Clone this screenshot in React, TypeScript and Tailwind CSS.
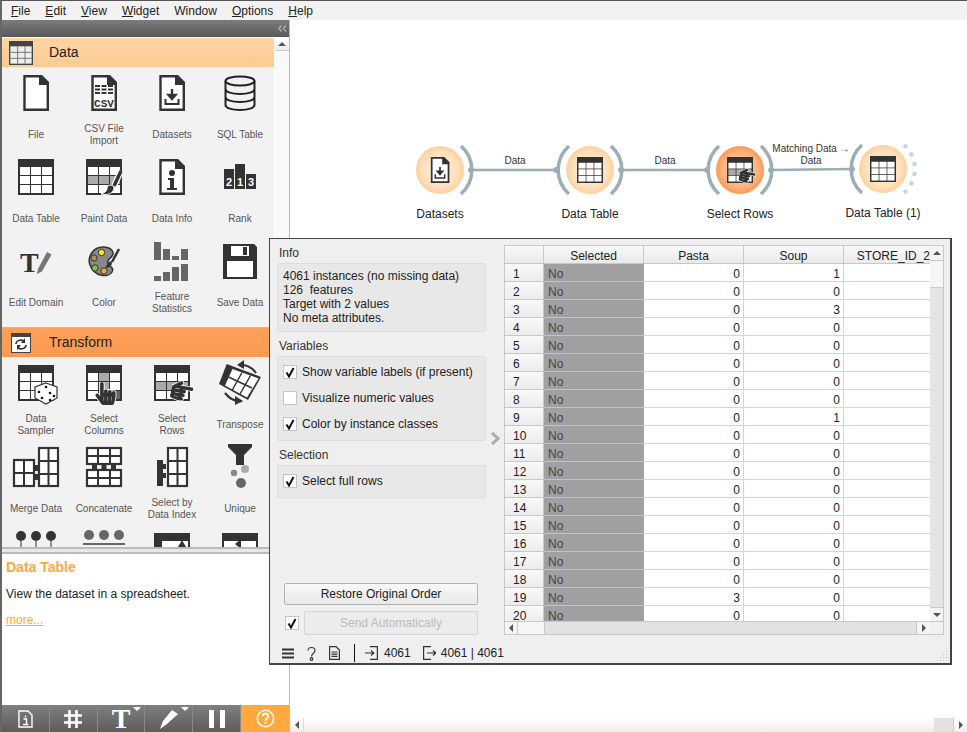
import type { ReactNode } from "react";
import { FaHandPointer } from "react-icons/fa";

const DARK = "#333";

function Ico({ children, x, y, size = 36 }: { children: ReactNode; x?: number; y?: number; size?: number }) {
  return (
    <svg className="overflow-visible" viewBox="0 0 36 36" width={size} height={size} x={x} y={y}>
      {children}
    </svg>
  );
}

// table drawing shared by most of the widgets
function Tbl({ tint }: { tint?: (r: number, c: number) => string | undefined }) {
  const xs = [2, 13, 24];
  const ys = [8, 17, 26];
  return (
    <g>
      <rect width="36" height="36" fill={DARK} />
      {ys.map((y, r) =>
        xs.map((x, c) => (
          <rect key={`${r}${c}`} x={x} y={y} width="10" height="8" fill={tint?.(r, c) ?? "#fff"} />
        )),
      )}
    </g>
  );
}

function Doc({ children }: { children?: ReactNode }) {
  return (
    <g>
      <path d="M6.5 1.2H22L29.8 9V34.8H6.5Z" fill="#fff" stroke={DARK} strokeWidth="2.4" />
      <path d="M21 0H24L31 7V10H21Z" fill={DARK} />
      {children}
    </g>
  );
}

const DownloadDoc = () => (
  <Doc>
    <path d="M18 14V22M14.5 20H21.5L18 24Z" stroke={DARK} strokeWidth="2.4" fill={DARK} />
    <path d="M11.5 24V29H24.5V24" stroke={DARK} strokeWidth="2" fill="none" />
  </Doc>
);

const Hand = ({ x, y, size }: { x: number; y: number; size: number }) => (
  <FaHandPointer x={x} y={y} size={size} color={DARK} stroke="#fff" strokeWidth={36} paintOrder="stroke" />
);

const Brush = () => (
  <g>
    <path d="M35 12L28 27" stroke="#fff" strokeWidth="6" />
    <path d="M35 12L28 27" stroke={DARK} strokeWidth="3.5" />
    <path d="M24 26C28 26 29 29 27 32C25 36 18 36 15 35C18 34 20 33 21 30C21 28 22 26 24 26Z" fill={DARK} stroke="#fff" strokeWidth="1" />
  </g>
);

const SelectRowsIcon = () => (
  <>
    <Tbl tint={(r) => (r === 1 ? "#aaa" : undefined)} />
    <g transform="rotate(100 28 26)">
      <Hand x={17} y={15} size={22} />
    </g>
  </>
);

const Pieces = ({ d }: { d: string }) => <path d={d} fill="none" stroke={DARK} strokeWidth="2" />;

const rows: { label: string; icon: ReactNode }[][] = [
  [
    { label: "File", icon: <Doc /> },
    {
      label: "CSV File\nImport",
      icon: (
        <Doc>
          <path d="M9 11H27M9 14.5H27M9 18H27" stroke={DARK} strokeWidth="2" strokeDasharray="5 1.5" />
          <text x="18" y="32" textAnchor="middle" fontSize="11" fontWeight="700" fill={DARK} fontFamily="Liberation Mono, monospace">CSV</text>
        </Doc>
      ),
    },
    { label: "Datasets", icon: <DownloadDoc /> },
    {
      label: "SQL Table",
      icon: (
        <g fill="none" stroke="#222" strokeWidth="2">
          <ellipse cx="18" cy="6" rx="14.5" ry="4.5" />
          <path d="M3.5 6V30C3.5 33 10 35 18 35S32.5 33 32.5 30V6M3.5 14C3.5 17 10 19 18 19S32.5 17 32.5 14M3.5 22C3.5 25 10 27 18 27S32.5 25 32.5 22" />
        </g>
      ),
    },
  ],
  [
    { label: "Data Table", icon: <Tbl /> },
    {
      label: "Paint Data",
      icon: (
        <>
          <Tbl tint={(r) => (r === 1 ? "#aaa" : undefined)} />
          <Brush />
        </>
      ),
    },
    {
      label: "Data Info",
      icon: (
        <Doc>
          <circle cx="18" cy="14" r="3" fill={DARK} />
          <path d="M14 19H20V29H23V31H13V29H16V21H14Z" fill={DARK} />
        </Doc>
      ),
    },
    {
      label: "Rank",
      icon: (
        <g>
          <rect x="2" y="10" width="10" height="20" fill={DARK} />
          <rect x="13" y="5" width="10" height="25" fill={DARK} />
          <rect x="24" y="15" width="10" height="15" fill={DARK} />
          <g fill="#fff" fontSize="11" fontWeight="700" textAnchor="middle" fontFamily="Liberation Sans, sans-serif">
            <text x="7" y="27">2</text>
            <text x="18" y="27">1</text>
            <text x="29" y="27">3</text>
          </g>
        </g>
      ),
    },
  ],
  [
    {
      label: "Edit Domain",
      icon: (
        <g>
          <text x="2" y="29" fontSize="28" fontWeight="700" fill={DARK} fontFamily="Liberation Serif, serif">T</text>
          <path d="M20 26L29 9L33.5 11.5L24 28.5L19 31Z" fill="#777" />
        </g>
      ),
    },
    {
      label: "Color",
      icon: (
        <g>
          <path d="M4 22C1 14 7 4 17 4C25 4 29 9 26 13C24 16 20 17 22 21C25 24 28 25 26 29C23 35 8 34 4 22Z" fill="#888" stroke={DARK} strokeWidth="1.5" />
          <circle cx="15.5" cy="9.5" r="3.2" fill="#f5e62e" stroke={DARK} />
          <circle cx="8" cy="15" r="3.2" fill="#b58a5a" stroke={DARK} />
          <circle cx="9" cy="25" r="3.2" fill="#86c232" stroke={DARK} />
          <circle cx="18" cy="28" r="3.2" fill="#f2a33a" stroke={DARK} />
          <path d="M33 6L26 19" stroke={DARK} strokeWidth="2.5" />
          <path d="M25 18C27 20 26 25 19 25C21 23 21 19 25 18Z" fill={DARK} />
        </g>
      ),
    },
    {
      label: "Feature\nStatistics",
      icon: (
        <g fill="#666">
          <rect x="0" y="-1" width="7" height="18" />
          <rect x="9" y="6" width="7" height="11" />
          <rect x="18" y="13" width="7" height="4" />
          <rect x="27" y="6" width="7" height="11" />
          <rect x="0" y="33" width="7" height="5" />
          <rect x="9" y="29" width="7" height="9" />
          <rect x="18" y="24" width="7" height="14" />
          <rect x="27" y="21" width="7" height="17" />
        </g>
      ),
    },
    {
      label: "Save Data",
      icon: (
        <g>
          <path d="M1 1H32L35 4V36H1Z" fill={DARK} />
          <rect x="9" y="3" width="18" height="10" fill="#fff" />
          <rect x="21" y="4" width="4" height="8" fill={DARK} />
          <rect x="5" y="18" width="26" height="16" fill="#fff" />
        </g>
      ),
    },
  ],
];

const transformRows: { label: string; icon: ReactNode }[][] = [
  [
    {
      label: "Data\nSampler",
      icon: (
        <>
          <Tbl />
          <path d="M28 18L39 22V33L28 39L17 33V22Z" fill="#fff" stroke={DARK} strokeWidth="1.2" />
          <g fill="#111">
            <circle cx="28" cy="22" r="1.3" />
            <circle cx="21" cy="27" r="1.3" />
            <circle cx="24" cy="33" r="1.3" />
            <circle cx="32" cy="28" r="1.3" />
            <circle cx="36" cy="31" r="1.3" />
            <circle cx="32" cy="35" r="1.3" />
          </g>
        </>
      ),
    },
    {
      label: "Select\nColumns",
      icon: (
        <>
          <Tbl tint={(r, c) => (c === 1 ? "#aaa" : r === 2 && c === 2 ? "#666" : undefined)} />
          <Hand x={8} y={17} size={23} />
        </>
      ),
    },
    { label: "Select\nRows", icon: <SelectRowsIcon /> },
    {
      label: "Transpose",
      icon: (
        <g>
          <path d="M4.7 -1L39 12L26 35L-3 19Z" fill={DARK} />
          <path d="M10.5 4L36.5 13.5L25 32.5L3 20.5Z" fill="#fff" />
          <path d="M20 7.5L10 25.5M28.5 10.5L18 29M6.5 12L30 23" stroke={DARK} strokeWidth="1.5" fill="none" />
          <path d="M17 0C23 -1 30 2 34 8M3 28C7 33 13 37 20 36" fill="none" stroke={DARK} strokeWidth="2.2" />
          <path d="M22 -5V4L15 0ZM13 31V40L21 36Z" fill={DARK} />
        </g>
      ),
    },
  ],
  [
    {
      label: "Merge Data",
      icon: (
        <g>
          <rect x="-4" y="11" width="20" height="26" fill="#fff" stroke={DARK} strokeWidth="2.2" />
          <rect x="21" y="-1" width="19" height="38" fill="#fff" stroke={DARK} strokeWidth="2.2" />
          <Pieces d="M6 11V37M-4 24H16M30.5 -1V37M21 12H40M21 25H40" />
          <path d="M15 16H22V22H15ZM15 25H22V31H15Z" fill={DARK} />
        </g>
      ),
    },
    {
      label: "Concatenate",
      icon: (
        <g>
          <rect x="1" y="-1" width="34" height="16" fill="#fff" stroke={DARK} strokeWidth="2.2" />
          <rect x="1" y="21" width="34" height="16" fill="#fff" stroke={DARK} strokeWidth="2.2" />
          <Pieces d="M12 -1V15M24 -1V15M1 7H35M12 21V37M24 21V37M1 29H35" />
          <path d="M6 15H11V21H6ZM15.5 15H20.5V21H15.5ZM25 15H30V21H25Z" fill={DARK} />
        </g>
      ),
    },
    {
      label: "Select by\nData Index",
      icon: (
        <g>
          <rect x="14" y="-1" width="19" height="38" fill="#fff" stroke={DARK} strokeWidth="2.2" />
          <Pieces d="M23.5 -1V37M14 12H33M14 25H33" />
          <path d="M3 11H9V15H12V20H9V24H12V29H9V37H3Z" fill={DARK} />
        </g>
      ),
    },
    {
      label: "Unique",
      icon: (
        <g>
          <path d="M6 -5H30V-2L22 6V16H14V6L6 -2Z" fill={DARK} />
          <circle cx="23" cy="20" r="4" fill="#aaa" />
          <circle cx="12" cy="24" r="3.2" fill="#888" />
          <circle cx="19" cy="34" r="5" fill="#666" />
        </g>
      ),
    },
  ],
  [
    {
      label: "",
      icon: (
        <g fill={DARK}>
          <circle cx="3" cy="3" r="5" />
          <circle cx="18" cy="3" r="5" />
          <circle cx="33" cy="3" r="5" />
          <rect x="2.5" y="8" width="1" height="6" />
          <rect x="17.5" y="8" width="1" height="6" />
          <rect x="32.5" y="8" width="1" height="6" />
        </g>
      ),
    },
    {
      label: "",
      icon: (
        <g fill="#666">
          <circle cx="3" cy="2" r="5" />
          <circle cx="18" cy="2" r="5" />
          <circle cx="33" cy="2" r="5" />
          <rect x="-3" y="10" width="42" height="2" />
        </g>
      ),
    },
    {
      label: "",
      icon: (
        <g>
          <rect width="36" height="36" fill={DARK} />
          <rect x="8" y="8" width="26" height="20" fill="#fff" />
          <path d="M28 7L32 14H24Z" fill={DARK} />
        </g>
      ),
    },
    {
      label: "",
      icon: (
        <g>
          <rect width="36" height="36" fill={DARK} />
          <rect x="2" y="8" width="32" height="20" fill="#fff" />
          <path d="M13 11L19 6V16Z" fill={DARK} />
        </g>
      ),
    },
  ],
];

function WidgetGrid({ data }: { data: { label: string; icon: ReactNode }[][] }) {
  return (
    <div className="grid grid-cols-[repeat(4,68px)] auto-rows-[84px]">
      {data.flat().map((w, i) => (
        <div key={i} className="flex flex-col items-center pt-2">
          <Ico>{w.icon}</Ico>
          <div className="mt-[11px] flex h-[26px] w-[68px] items-center justify-center text-center text-[10px] leading-[12.5px] whitespace-pre-line text-[#555]">
            {w.label}
          </div>
        </div>
      ))}
    </div>
  );
}

function Category({ name, bg, pad, icon }: { name: string; bg: string; pad: string; icon: ReactNode }) {
  return (
    <div className={`flex h-[29px] items-center text-[14px] text-[#222] ${bg}`}>
      <div className={`w-[47px] ${pad}`}>{icon}</div>
      {name}
    </div>
  );
}

function Dock() {
  return (
    <div className="flex w-[290px] flex-col border-r border-l-2 border-r-[#bbb] border-l-[#666] bg-white">
      <div className="flex h-[17px] items-center justify-end bg-gradient-to-b from-[#7c7c7c] to-[#595959] pr-[2px]">
        <svg width="9" height="7" viewBox="0 0 9 7" fill="none" stroke="#b4b4b4" strokeWidth="1.2">
          <path d="M3.5 .5L.8 3.5L3.5 6.5M8 .5L5.3 3.5L8 6.5" />
        </svg>
      </div>
      <div className="flex h-[510px] overflow-hidden pt-px">
        <div className="h-[600px] w-[272px] bg-[#f2f2f2]">
          <Category
            name="Data"
            pad="pl-[7px]"
            bg="bg-gradient-to-b from-[#ffd5a3] to-[#fbcb92]"
            icon={
              <svg className="block" width="24" height="24" viewBox="0 0 36 36">
                <rect width="36" height="36" fill="#444" />
                <path d="M2 8H34V34H2Z" fill="#eee" />
                <path d="M13 8V34M24 8V34M2 17H34M2 26H34" stroke="#777" strokeWidth="1.5" />
              </svg>
            }
          />
          <WidgetGrid data={rows} />
          <div className="mt-2 border-t border-[#bbb]" />
          <Category
            name="Transform"
            pad="pl-[9px]"
            bg="bg-gradient-to-b from-[#ffa05a] to-[#f99a52]"
            icon={
              <svg className="block" width="20" height="20" viewBox="0 0 20 20">
                <rect width="20" height="20" fill="#444" />
                <rect x="1" y="4" width="18" height="15" fill="#fff" />
                <path d="M5 11C5 8 9 6 13 8M15 12C15 15 11 17 7 15" fill="none" stroke={DARK} strokeWidth="1.6" />
                <path d="M14 5V10H10ZM6 17V12H10Z" fill={DARK} />
              </svg>
            }
          />
          <WidgetGrid data={transformRows} />
        </div>
        <div className="ml-px w-[14px] bg-[#f9f9f9]">
          <div className="flex h-[13px] items-center justify-center border-b border-[#ccc] bg-gradient-to-b from-white to-[#ececec]">
            <div className="h-0 w-0 border-x-[4px] border-b-[4px] border-x-transparent border-b-[#555]" />
          </div>
        </div>
      </div>
      <div className="h-[7px] border-y-2 border-y-[#bbb] bg-[#e8e8e8]" />
      <div className="flex-1 bg-white px-1 pt-[5px]">
        <div className="text-[14px] leading-[16px] font-bold text-[#ffa840]">Data Table</div>
        <p className="mt-[11px] text-[12px] leading-[16px] text-[#222]">View the dataset in a spreadsheet.</p>
        <a className="mt-[10px] block text-[12px] leading-[16px] text-[#ffa840] underline">more...</a>
      </div>
      <Toolbar />
    </div>
  );
}

function Toolbar() {
  const cls = "flex w-[48px] items-center justify-center border-r border-r-[#8a8a8a]";
  return (
    <div className="flex h-[27px] bg-gradient-to-b from-[#808080] to-[#5c5c5c]">
      <div className={cls}>
        <svg width="15" height="18" viewBox="0 0 15 18" fill="none" stroke="#fff" strokeWidth="1.4">
          <path d="M1 1H10L14 5V17H1Z" />
          <path d="M7.5 5.5V7.5M5.5 9H8.5V14M5 14.5H10.5" />
        </svg>
      </div>
      <div className={cls}>
        <svg width="20" height="20" viewBox="0 0 20 20" stroke="#fff" strokeWidth="2.6">
          <path d="M6.5 1V19M13.5 1V19M1 6.5H19M1 13.5H19" />
        </svg>
      </div>
      <div className={`${cls} relative`}>
        <span className="font-['Liberation_Serif'] text-[28px] leading-none font-bold text-white">T</span>
        <div className="absolute top-[2px] right-[3px] h-0 w-0 border-x-[4px] border-t-[4px] border-x-transparent border-t-white" />
      </div>
      <div className={`${cls} relative`}>
        <svg width="20" height="20" viewBox="0 0 20 20" fill="#fff">
          <path d="M13 1L19 5L8 15L1 20L4 12Z" />
        </svg>
        <div className="absolute top-[2px] right-[3px] h-0 w-0 border-x-[4px] border-t-[4px] border-x-transparent border-t-white" />
      </div>
      <div className={`${cls} gap-[6px]`}>
        <div className="h-[18px] w-[5px] bg-white" />
        <div className="h-[18px] w-[5px] bg-white" />
      </div>
      <div className="flex w-[48px] items-center justify-center bg-[#ffa840]">
        <svg width="19" height="19" viewBox="0 0 19 19" fill="none" stroke="#fff" strokeWidth="1.6">
          <circle cx="9.5" cy="9.5" r="8.2" />
          <path d="M6.8 7.2C7 3.8 12.2 4 12.2 7.2C12.2 9.2 9.5 9.3 9.5 11.5" strokeWidth="1.8" />
          <path d="M9.5 12.8V14.8" strokeWidth="1.8" />
        </svg>
      </div>
    </div>
  );
}

function Arc({ cx, cy, side, dashed }: { cx: number; cy: number; side: "l" | "r"; dashed?: boolean }) {
  const dx = side === "r" ? 21 : -21;
  const sweep = side === "r" ? 1 : 0;
  return (
    <path
      d={`M${cx + dx} ${cy - 24}A32 32 0 0 ${sweep} ${cx + dx} ${cy + 24}`}
      fill="none"
      stroke={dashed ? "#c9d3d8" : "#9badb5"}
      strokeWidth={dashed ? 4 : 3.5}
      strokeDasharray={dashed ? "4 6" : undefined}
    />
  );
}

function Diagram() {
  const links = [
    [471, 170, 556, 170],
    [621, 170, 707, 170],
    [771, 170, 852, 169],
  ];
  return (
    <>
      <svg className="pointer-events-none absolute inset-0" width="967" height="732">
        <defs>
          <radialGradient id="light">
            <stop offset="0" stopColor="#ffefdc" />
            <stop offset="0.75" stopColor="#fee0bc" />
            <stop offset="1" stopColor="#fdd09b" />
          </radialGradient>
          <radialGradient id="strong">
            <stop offset="0" stopColor="#ffcba6" />
            <stop offset="0.7" stopColor="#ffb583" />
            <stop offset="1" stopColor="#fb9a55" />
          </radialGradient>
        </defs>
        {links.map((l, i) => (
          <g key={i} stroke="#9badb5" fill="#9badb5">
            <line x1={l[0]} y1={l[1]} x2={l[2]} y2={l[3]} strokeWidth="2.5" />
            <circle cx={l[0]} cy={l[1]} r="2.5" />
            <circle cx={l[2]} cy={l[3]} r="2.5" />
          </g>
        ))}
        <circle cx="440" cy="170" r="24" fill="url(#light)" />
        <Arc cx={440} cy={170} side="r" />
        <Ico x={427} y={157} size={26}><DownloadDoc /></Ico>

        <circle cx="590" cy="170" r="24" fill="url(#light)" />
        <Arc cx={590} cy={170} side="l" />
        <Arc cx={590} cy={170} side="r" />
        <Ico x={577} y={157} size={26}><Tbl /></Ico>

        <circle cx="740" cy="170" r="24" fill="url(#strong)" />
        <Arc cx={740} cy={170} side="l" />
        <Arc cx={740} cy={170} side="r" />
        <Ico x={727} y={157} size={26}><SelectRowsIcon /></Ico>

        <circle cx="883" cy="169" r="24" fill="url(#light)" />
        <Arc cx={883} cy={169} side="l" />
        <Arc cx={883} cy={169} side="r" dashed />
        <Ico x={870} y={156} size={26}><Tbl /></Ico>
      </svg>
      <div className="absolute top-[155px] left-[515px] -translate-x-1/2 text-[10px] leading-[12px] text-[#333]">Data</div>
      <div className="absolute top-[155px] left-[665px] -translate-x-1/2 text-[10px] leading-[12px] text-[#333]">Data</div>
      <div className="absolute top-[143px] left-[811px] -translate-x-1/2 text-center text-[10px] leading-[12px] whitespace-nowrap text-[#333]">
        Matching Data →<br />Data
      </div>
      <div className="absolute top-[207px] left-[440px] -translate-x-1/2 text-[12px] leading-[15px] text-[#222]">Datasets</div>
      <div className="absolute top-[207px] left-[590px] -translate-x-1/2 text-[12px] leading-[15px] text-[#222]">Data Table</div>
      <div className="absolute top-[207px] left-[740px] -translate-x-1/2 text-[12px] leading-[15px] text-[#222]">Select Rows</div>
      <div className="absolute top-[206px] left-[883px] -translate-x-1/2 text-[12px] leading-[15px] whitespace-nowrap text-[#222]">Data Table (1)</div>
    </>
  );
}

function Check({ on }: { on?: boolean }) {
  return (
    <div className="flex h-[14px] w-[14px] shrink-0 items-center justify-center border border-[#c4c4c4] bg-white">
      {on && (
        <svg width="10" height="11" viewBox="0 0 10 11" fill="none" stroke="#111" strokeWidth="2">
          <path d="M1.5 5.5L4 9.5L8.5 1" />
        </svg>
      )}
    </div>
  );
}

function CheckRow({ on, label }: { on?: boolean; label: string }) {
  return (
    <div className="flex h-[26px] items-center gap-[5px]">
      <Check on={on} />
      {label}
    </div>
  );
}

const tableData = [
  [0, 1], [0, 0], [0, 3], [0, 0], [0, 0], [0, 0], [0, 0], [0, 0], [0, 1], [0, 0],
  [0, 0], [0, 0], [0, 0], [0, 0], [0, 0], [0, 0], [0, 0], [0, 0], [3, 0], [0, 0],
];

function DataTable() {
  const head = "flex items-center justify-center border-r border-b border-[#c8c8c8] bg-gradient-to-b from-[#f9f9f9] to-[#e9e9e9] pt-[2px]";
  const cell = "flex items-center justify-end border-r border-b border-[#d4d4d4] pt-[2px] pr-[3px]";
  return (
    <div className="flex h-[390px] w-[440px] flex-col border-t border-l border-[#c8c8c8] text-[12px] text-[#222]">
      <div className="flex h-[375px]">
        <div className="w-[425px] overflow-hidden bg-white">
          <div className="flex h-[18px]">
            <div className={`${head} w-[39px]`} />
            <div className={`${head} w-[100px]`}>Selected</div>
            <div className={`${head} w-[100px]`}>Pasta</div>
            <div className={`${head} w-[100px]`}>Soup</div>
            <div className={`${head} w-[86px] !justify-end whitespace-nowrap !border-r-0`}>STORE_ID_2</div>
          </div>
          {tableData.map((r, i) => (
            <div key={i} className="flex h-[18px]">
              <div className="flex w-[39px] items-center border-r border-b border-[#c8c8c8] bg-gradient-to-b from-[#f9f9f9] to-[#ececec] pt-[2px] pl-2">{i + 1}</div>
              <div className="flex w-[100px] items-center border-b border-b-[#c4c4c4] bg-[#a0a0a0] pt-[2px] pl-[4px] text-[#444]">No</div>
              <div className={`${cell} w-[100px]`}>{r[0]}</div>
              <div className={`${cell} w-[100px]`}>{r[1]}</div>
              <div className={`${cell} w-[86px] border-r-0`} />
            </div>
          ))}
        </div>
        <div className="flex w-[14px] flex-col border-r border-[#c8c8c8] bg-[#f4f4f4]">
          <div className="flex h-[15px] items-center justify-center border-b border-[#c8c8c8]">
            <div className="h-0 w-0 border-x-[4px] border-b-[4px] border-x-transparent border-b-[#555]" />
          </div>
          <div className="h-[26px] bg-[#f6f6f6]" />
          <div className="flex-1 border-t border-[#ccc] bg-[#e4e4e4]" />
          <div className="flex h-[14px] items-center justify-center border-t border-[#c8c8c8]">
            <div className="h-0 w-0 border-x-[4px] border-t-[4px] border-x-transparent border-t-[#555]" />
          </div>
        </div>
      </div>
      <div className="flex h-[15px] border-y border-r border-[#c8c8c8] bg-[#e2e2e2]">
        <div className="flex w-[13px] items-center justify-center border-r border-[#c8c8c8] bg-[#f4f4f4]">
          <div className="h-0 w-0 border-y-[4px] border-r-[4px] border-y-transparent border-r-[#555]" />
        </div>
        <div className="w-[27px] border-r border-[#c8c8c8] bg-[#f6f6f6]" />
        <div className="flex-1" />
        <div className="flex w-[14px] items-center justify-center border-l border-[#c8c8c8] bg-[#f4f4f4]">
          <div className="h-0 w-0 border-y-[4px] border-l-[4px] border-y-transparent border-l-[#555]" />
        </div>
        <div className="w-[13px] bg-[#f0f0f0]" />
      </div>
    </div>
  );
}

function StatusBar() {
  return (
    <div className="relative flex h-[23px] items-center pt-[3px] pl-3 text-[12px] text-[#222]">
      <svg width="12" height="11" viewBox="0 0 12 11" stroke={DARK} strokeWidth="2">
        <path d="M0 1.5H12M0 5.5H12M0 9.5H12" />
      </svg>
      <svg className="ml-[12px]" width="11" height="15" viewBox="0 0 11 15" fill="none" stroke={DARK} strokeWidth="1.2">
        <path d="M2 4.5C2 0.5 9 0.5 9 4.5C9 7.5 5.5 7.5 5.5 10.5" />
        <circle cx="5.5" cy="13" r="1.3" />
      </svg>
      <svg className="ml-[12px]" width="11" height="14" viewBox="0 0 11 14" fill="none" stroke={DARK} strokeWidth="1.2">
        <path d="M.6.6H7L10.4 4V13.4H.6ZM2.5 6H8.5M2.5 8.2H8.5M2.5 10.4H8.5" />
      </svg>
      <div className="mr-[10px] ml-[14px] h-[18px] w-[1px] bg-[#111]" />
      <svg width="13" height="14" viewBox="0 0 13 14" fill="none" stroke={DARK} strokeWidth="1.2">
        <path d="M5 .6H12.4V13.4H5M0 7H8M6 4.5L8.8 7L6 9.5" />
      </svg>
      <span className="ml-[6px]">4061</span>
      <svg className="ml-[12px]" width="13" height="14" viewBox="0 0 13 14" fill="none" stroke={DARK} strokeWidth="1.2">
        <path d="M8 .6H.6V13.4H8M4 7H12M10 4.5L12.8 7L10 9.5" />
      </svg>
      <span className="ml-[5px]">4061 | 4061</span>
      <svg className="absolute right-[2px] bottom-[2px]" width="11" height="11" viewBox="0 0 11 11" fill="#bbb">
        <path d="M9 1h1v1H9zM6 4h1v1H6zM9 4h1v1H9zM3 7h1v1H3zM6 7h1v1H6zM9 7h1v1H9zM0 10h1v1H0zM3 10h1v1H3zM6 10h1v1H6zM9 10h1v1H9z" />
      </svg>
    </div>
  );
}

function FloatingWindow() {
  const box = "rounded-[2px] border border-[#dcdcdc] bg-[#e8e8e8] text-[12px] text-[#222]";
  const caption = "h-[15px] pl-[2px] text-[12px] leading-[15px] text-[#333]";
  return (
    <div className="absolute top-[238px] left-[269px] flex h-[427px] w-[683px] flex-col border-2 border-t border-l border-[#444] bg-[#efefef]">
      <div className="flex flex-1">
        <div className="flex w-[216px] flex-col pt-[7px] pl-[7px]">
          <div className={caption}>Info</div>
          <div className={`${box} mt-[2px] h-[69px] px-[5px] pt-[5px] leading-[14px]`}>
            4061 instances (no missing data)<br />
            126&nbsp; features<br />
            Target with 2 values<br />
            No meta attributes.
          </div>
          <div className={`${caption} mt-[7px]`}>Variables</div>
          <div className={`${box} mt-[2px] h-[85px] pt-[2px] pl-[5px]`}>
            <CheckRow on label="Show variable labels (if present)" />
            <CheckRow label="Visualize numeric values" />
            <CheckRow on label="Color by instance classes" />
          </div>
          <div className={`${caption} mt-[7px]`}>Selection</div>
          <div className={`${box} mt-[2px] h-[33px] pt-[2px] pl-[5px]`}>
            <CheckRow on label="Select full rows" />
          </div>
          <div className="mt-auto pr-[1px] pb-[5px] pl-[7px]">
            <button className="flex h-[22px] w-[194px] items-center justify-center rounded-[2px] border border-[#b4b4b4] bg-gradient-to-b from-[#f8f8f8] to-[#e8e8e8] text-[12px] text-[#222]">
              Restore Original Order
            </button>
            <div className="mt-[6px] flex items-center gap-[5px] pl-px">
              <Check on />
              <button className="flex h-[24px] w-[174px] items-center justify-center rounded-[2px] border border-[#d4d4d4] bg-[#ececec] text-[12px] text-[#bbb]">
                Send Automatically
              </button>
            </div>
          </div>
        </div>
        <div className="flex w-[18px] items-center justify-center pb-[2px]">
          <svg width="10" height="13" viewBox="0 0 10 13" fill="none" stroke="#aaa" strokeWidth="3">
            <path d="M2 1L8 6.5L2 12" />
          </svg>
        </div>
        <div className="pt-[6px]">
          <DataTable />
        </div>
      </div>
      <StatusBar />
    </div>
  );
}

export default function App() {
  return (
    <div className="relative flex h-[732px] w-[967px] flex-col overflow-hidden bg-white font-['Liberation_Sans',sans-serif]">
      <div className="flex h-[20px] items-center gap-[15px] border-t border-t-[#555] border-l-2 border-l-[#666] bg-[#f2f2f2] pl-[9px] text-[12px] text-[#222]">
        {["File", "Edit", "View", "Widget", "Window", "Options", "Help"].map((m) => (
          <span key={m}>
            {m === "Window" ? m : <><span className="underline">{m[0]}</span>{m.slice(1)}</>}
          </span>
        ))}
      </div>
      <div className="flex flex-1 overflow-hidden">
        <Dock />
        <div className="flex flex-1 flex-col justify-end">
          <div className="flex h-[14px] bg-gradient-to-b from-white to-[#eeeeee]">
            <div className="flex w-[14px] items-center justify-center border-r border-[#ddd]">
              <div className="h-0 w-0 border-y-[4px] border-r-[4px] border-y-transparent border-r-[#555]" />
            </div>
            <div className="flex-1" />
            <div className="w-[19px] bg-[#e2e2e2]" />
            <div className="flex w-[14px] items-center justify-center border-l border-[#ccc]">
              <div className="h-0 w-0 border-y-[4px] border-l-[4px] border-y-transparent border-l-[#555]" />
            </div>
          </div>
        </div>
      </div>
      <Diagram />
      <FloatingWindow />
    </div>
  );
}
